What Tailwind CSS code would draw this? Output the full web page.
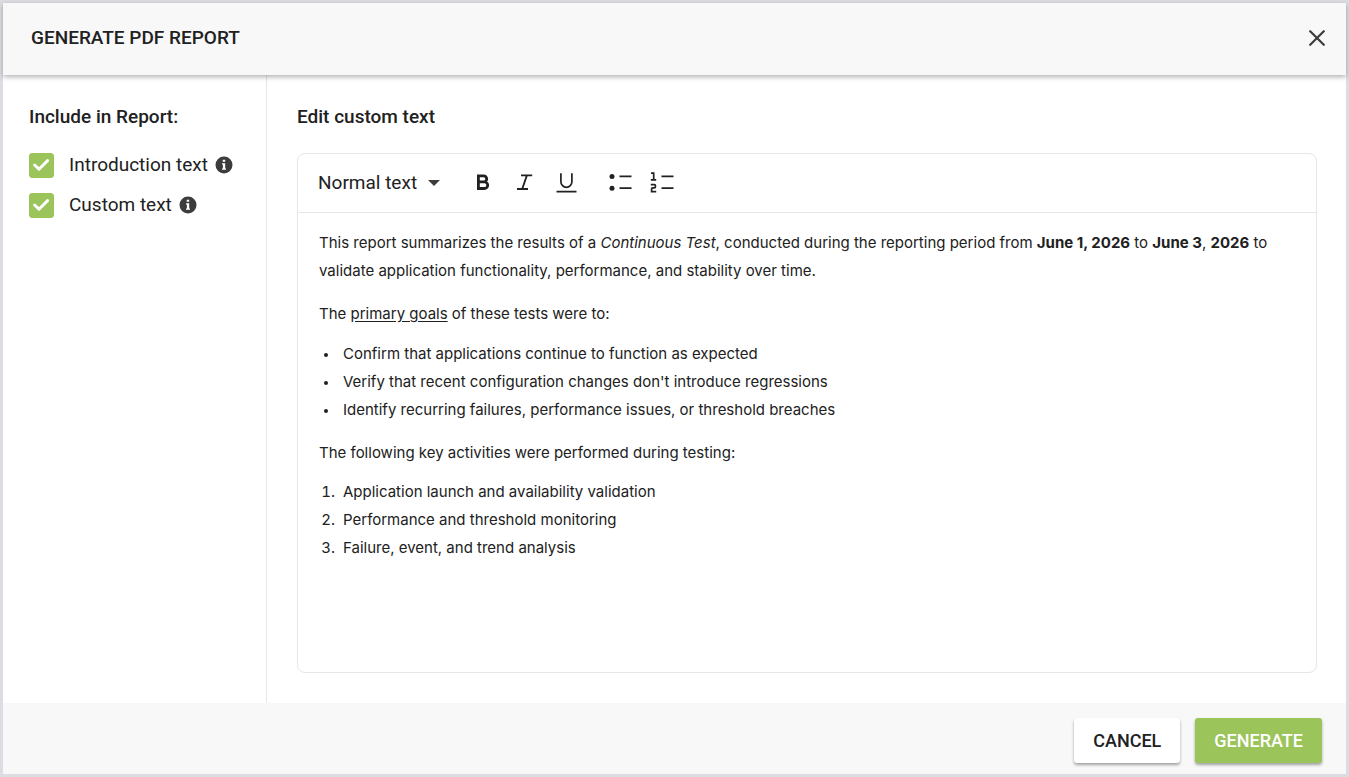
<!DOCTYPE html>
<html lang="en">
<head>
    <meta charset="UTF-8">
    <meta name="viewport" content="width=device-width, initial-scale=1.0">
    <title>Generate PDF Report</title>
    <script src="https://cdn.jsdelivr.net/npm/@tailwindcss/browser@4"></script>
</head>
<body class="bg-white font-[Roboto,sans-serif] text-[#212121]">
    <div role="dialog" aria-labelledby="dialog-title" class="flex min-h-screen flex-col border-3 border-[#dcdde2]">

        <!-- Header -->
        <header class="relative flex h-18 items-center justify-between bg-[#f8f8f8] pl-7 pr-[15px] pb-[3px] shadow-[0_2px_5px_rgba(0,0,0,0.3)]">
            <h1 id="dialog-title" class="text-[19px]/7 font-medium">GENERATE PDF REPORT</h1>
            <button type="button" aria-label="Close" class="flex size-7 items-center justify-center">
                <svg class="size-4" viewBox="0 0 16 16" fill="none" stroke="#3c3c3c" stroke-width="2.2" stroke-linecap="round"><path d="M1.2 1.2l13.6 13.6M14.8 1.2L1.2 14.8"/></svg>
            </button>
        </header>

        <div class="flex flex-1">
            <!-- Report sections -->
            <aside class="w-66 shrink-0 border-r border-[#e6e6e6] px-[26px] pt-7">
                <h2 class="text-[19px]/7 font-medium">Include in Report:</h2>
                <div class="mt-5 flex flex-col gap-3">
                    <div class="flex h-7 items-center">
                        <input id="intro-text" type="checkbox" checked class="peer size-[25px] appearance-none rounded-[3px] border border-[#9bc45a] checked:bg-[#9bc45a]">
                        <svg class="pointer-events-none -ml-[25px] size-[25px] opacity-0 peer-checked:opacity-100" viewBox="0 0 25 25" fill="none" stroke="#fff" stroke-width="3" stroke-linecap="round" stroke-linejoin="round"><path d="M5.6 12l4.4 4.2 8.6-8.6"/></svg>
                        <label for="intro-text" class="ml-[15px] text-[19px]/7">Introduction text</label>
                        <button type="button" aria-label="About introduction text" class="ml-[7px]">
                            <svg class="size-[18px]" viewBox="0 0 18 18"><circle cx="9" cy="9" r="8.5" fill="#3c3c3c"/><path d="M7.7 3.7h2.5v2H7.7zM7 7.2h3.2v5.2H11v1.3H7v-1.3h.9V8.5H7z" fill="#fff"/></svg>
                        </button>
                    </div>
                    <div class="flex h-7 items-center">
                        <input id="custom-text" type="checkbox" checked class="peer size-[25px] appearance-none rounded-[3px] border border-[#9bc45a] checked:bg-[#9bc45a]">
                        <svg class="pointer-events-none -ml-[25px] size-[25px] opacity-0 peer-checked:opacity-100" viewBox="0 0 25 25" fill="none" stroke="#fff" stroke-width="3" stroke-linecap="round" stroke-linejoin="round"><path d="M5.6 12l4.4 4.2 8.6-8.6"/></svg>
                        <label for="custom-text" class="ml-[15px] text-[19px]/7">Custom text</label>
                        <button type="button" aria-label="About custom text" class="ml-[7px]">
                            <svg class="size-[18px]" viewBox="0 0 18 18"><circle cx="9" cy="9" r="8.5" fill="#3c3c3c"/><path d="M7.7 3.7h2.5v2H7.7zM7 7.2h3.2v5.2H11v1.3H7v-1.3h.9V8.5H7z" fill="#fff"/></svg>
                        </button>
                    </div>
                </div>
            </aside>

            <!-- Editor -->
            <main class="flex min-w-0 flex-1 flex-col pt-7 pr-[29px] pb-[30px] pl-[30px]">
                <h2 id="editor-title" class="text-[19px]/7 font-medium">Edit custom text</h2>
                <div class="mt-[22px] flex flex-1 flex-col rounded-lg border border-[#e6e6e6]">
                    <div class="flex h-[59px] items-center border-b border-[#e6e6e6] px-5">
                        <div class="flex items-center">
                            <select aria-label="Text style" class="w-[122px] appearance-none bg-transparent text-[19px]/7">
                                <option>Normal text</option>
                                <option>Heading 1</option>
                                <option>Heading 2</option>
                            </select>
                            <svg class="pointer-events-none -ml-3 h-[6px] w-3" viewBox="0 0 12 6"><path d="M0 0h12L6 6z" fill="#3c3c3c"/></svg>
                        </div>
                        <div class="ml-7 flex items-center gap-[14px] pb-0.5">
                            <button type="button" aria-label="Bold">
                                <svg class="size-7" viewBox="0 0 28 28" fill="none" stroke="#212121" stroke-width="2.8"><path d="M10.4 7.9h5.3a3 3 0 0 1 0 6h-5.3M10.4 13.9h6a3.3 3.3 0 0 1 0 6.6h-6zM10.4 6.5v15.4"/></svg>
                            </button>
                            <button type="button" aria-label="Italic">
                                <svg class="size-7" viewBox="0 0 28 28" fill="none" stroke="#212121" stroke-width="1.8"><path d="M11 7.4h11.2M7 21h11M16.9 7.4L12.2 21"/></svg>
                            </button>
                            <button type="button" aria-label="Underline">
                                <svg class="size-7" viewBox="0 0 28 28" fill="none" stroke="#212121" stroke-width="1.7"><path d="M8.9 5.2v8.6a5.5 5.5 0 0 0 11 0V5.2M4.5 23.7h20"/></svg>
                            </button>
                        </div>
                        <div class="ml-[26px] flex items-center gap-[14px] pb-0.5">
                            <button type="button" aria-label="Bulleted list">
                                <svg class="size-7" viewBox="0 0 28 28"><g fill="#212121"><circle cx="6" cy="8.4" r="2.5"/><circle cx="6" cy="20.2" r="2.5"/><path d="M13.5 7.5h12v1.8h-12zM13.5 19.3h12v1.8h-12z"/></g></svg>
                            </button>
                            <button type="button" aria-label="Numbered list">
                                <svg class="size-7" viewBox="0 0 28 28" fill="none" stroke="#212121" stroke-width="1.7"><path d="M3 5.2h2.7v6.6M2.8 11.8h5.4M13.5 8.4h12M13.5 20.2h12M2.8 16.6h3.6q1 0 1 1v1.2q0 1-1 1H4.6q-1 0-1 1v2.8h4.6"/></svg>
                            </button>
                        </div>
                    </div>

                    <div role="textbox" aria-multiline="true" aria-labelledby="editor-title" contenteditable="true" spellcheck="false" class="flex-1 px-[21px] pt-4 font-[Inter,sans-serif] text-[15px]/7 outline-none">
                        <p>This report summarizes the results of a <em>Continuous Test</em>, conducted during the reporting period from <strong>June 1, 2026</strong> to <strong>June 3</strong>, <strong>2026</strong> to validate application functionality, performance, and stability over time.</p>
                        <p class="mt-[15px]">The <u class="underline-offset-2">primary goals</u> of these tests were to:</p>
                        <ul class="mt-3 list-disc pl-5 marker:text-xs">
                            <li class="pl-1">Confirm that applications continue to function as expected</li>
                            <li class="pl-1">Verify that recent configuration changes don't introduce regressions</li>
                            <li class="pl-1">Identify recurring failures, performance issues, or threshold breaches</li>
                        </ul>
                        <p class="mt-[15px]">The following key activities were performed during testing:</p>
                        <ol class="mt-[11px] list-decimal pl-5">
                            <li class="pl-1">Application launch and availability validation</li>
                            <li class="pl-1">Performance and threshold monitoring</li>
                            <li class="pl-1">Failure, event, and trend analysis</li>
                        </ol>
                    </div>
                </div>
            </main>
        </div>

        <!-- Actions -->
        <footer class="flex h-[71px] items-start justify-end gap-[15px] bg-[#f8f8f8] px-6 pt-[15px]">
            <button type="button" class="h-[45px] rounded-[3px] bg-white px-[19px] text-lg font-medium shadow-[0_2px_3px_rgba(0,0,0,0.35)]">CANCEL</button>
            <button type="button" class="h-[45px] rounded-[3px] bg-[#9bc45a] px-[19px] text-lg font-medium text-white shadow-[0_2px_3px_rgba(0,0,0,0.35)]">GENERATE</button>
        </footer>
    </div>
</body>
</html>
